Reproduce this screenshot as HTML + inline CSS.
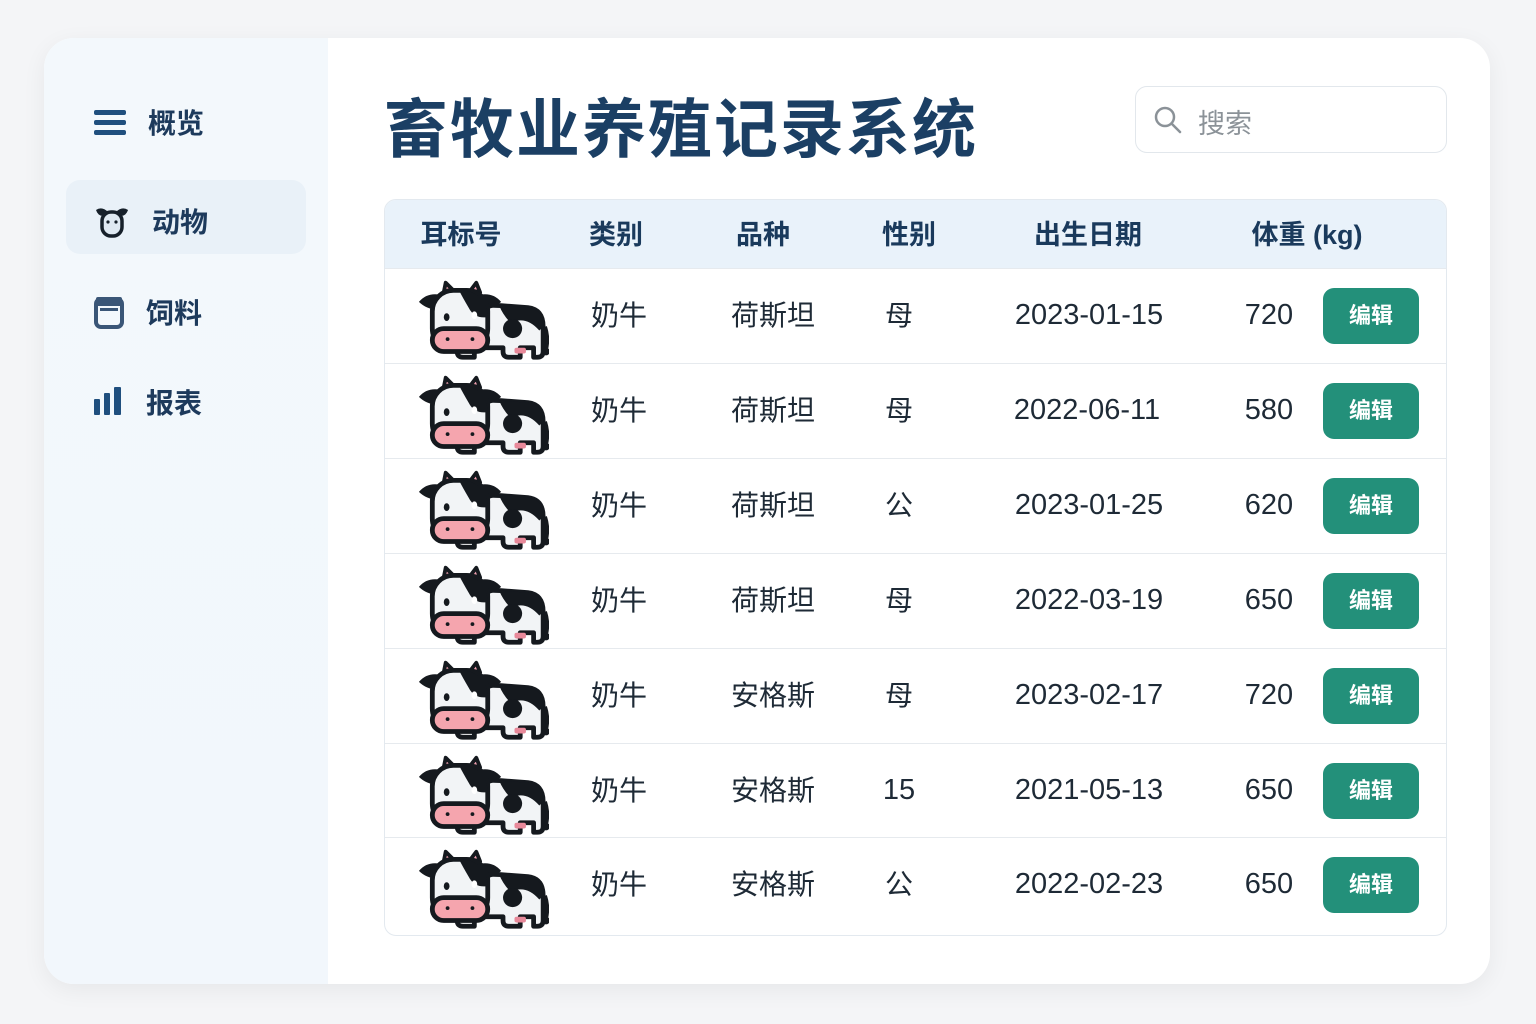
<!DOCTYPE html>
<html><head><meta charset="utf-8"><style>
*{margin:0;padding:0;box-sizing:border-box}
body{width:1536px;height:1024px;background:#f4f5f7;font-family:"Liberation Sans","Noto Sans CJK SC",sans-serif;position:relative;overflow:hidden}
.card{position:absolute;left:44px;top:38px;width:1446px;height:946px;background:#fff;border-radius:30px;box-shadow:0 6px 24px rgba(0,0,0,.06);overflow:hidden}
.side{position:absolute;left:0;top:0;width:284px;height:946px;background:linear-gradient(#f3f8fc,#f2f7fc)}
.nav{position:absolute;left:50px;font-size:28px;font-weight:bold;color:#1d3a5c;display:flex;align-items:center}
.nav svg{margin-right:22px}
.active{position:absolute;left:22px;top:142px;width:240px;height:74px;background:#e9f1f8;border-radius:14px}
.title{position:absolute;left:384px;top:80px;font-size:64px;font-weight:bold;color:#1b3f64;letter-spacing:2px;font-family:"Noto Sans CJK SC",sans-serif;line-height:90px}
.search{position:absolute;left:1135px;top:86px;width:312px;height:67px;border:1.5px solid #e2e7ec;border-radius:12px;background:#fff}
.search span{position:absolute;left:62px;top:15px;font-size:27px;color:#8b9298}
.table{position:absolute;left:384px;top:199px;width:1063px;height:737px;border:1.5px solid #e3e9ef;border-radius:12px;overflow:hidden;background:#fff}
.thead{position:absolute;left:0;top:0;width:100%;height:68px;background:#e9f2fa}
.th{position:absolute;top:13px;font-size:27px;font-weight:bold;color:#1a3a5c;transform:translateX(-50%);white-space:nowrap}
.row{position:absolute;left:0;width:100%;height:95px;border-top:1.5px solid #e6eaee}
.td{position:absolute;top:27px;height:40px;line-height:40px;font-size:28px;color:#1e2a36;transform:translateX(-50%);white-space:nowrap}
.n{font-size:29px;top:26px}
.btn{position:absolute;left:938px;top:19px;width:96px;height:56px;background:#23907a;border-radius:11px;color:#fff;font-size:22px;font-weight:bold;text-align:center;line-height:56px}
.cow{position:absolute;left:30px;top:8px}
</style></head><body>
<svg width="0" height="0" style="position:absolute"><defs>
<symbol id="cow" viewBox="0 0 140 90">
<path d="M52 40 Q60 28 90 30 L118 32 Q134 34 134 52 L134 78 Q134 84 128 84 L124 84 L124 74 L110 74 L110 84 L98 84 Q92 84 92 78 L92 74 L62 74 L62 84 L50 84 Q44 84 44 78 L44 60 Z" fill="#f2f4f6" stroke="#15191e" stroke-width="5" stroke-linejoin="round"/>
<path d="M88 30 L118 32 Q134 34 134 52 L130 56 Q116 40 100 48 Q92 40 88 30Z" fill="#15191e"/>
<circle cx="102" cy="54" r="10" fill="#15191e"/>
<path d="M136 52 Q140 64 137 76" stroke="#15191e" stroke-width="4" fill="none"/>
<circle cx="137" cy="78" r="4" fill="#15191e"/>
<rect x="104" y="74" width="12" height="6" rx="2" fill="#e8899a"/>
<path d="M4 26 Q14 14 32 20 L62 20 Q80 14 90 26 Q82 34 70 34 L24 34 Q12 34 4 26Z" fill="#15191e"/>
<path d="M30 16 L32 6 L40 14 Z M58 14 L64 6 L68 16Z" fill="#f0a0b0" stroke="#15191e" stroke-width="4" stroke-linejoin="round"/>
<rect x="18" y="14" width="58" height="62" rx="22" fill="#f2f4f6" stroke="#15191e" stroke-width="5"/>
<path d="M46 14 Q74 14 76 42 Q62 44 56 32 Q50 22 46 14Z" fill="#15191e"/>
<ellipse cx="33" cy="42" rx="3" ry="4" fill="#15191e"/>
<ellipse cx="62" cy="40" rx="3" ry="4" fill="#fff"/>
<rect x="18" y="54" width="58" height="24" rx="12" fill="#f5a5ae" stroke="#15191e" stroke-width="5"/>
<circle cx="34" cy="65" r="2" fill="#15191e"/><circle cx="60" cy="65" r="2" fill="#15191e"/>
</symbol></defs></svg>
<div class="card">
<div class="side"></div>
<div class="active"></div>
<div class="nav" style="top:64px"><svg width="32" height="28"><rect x="0" y="2" width="32" height="5" rx="2" fill="#1f4f7e"/><rect x="0" y="12" width="32" height="5" rx="2" fill="#1f4f7e"/><rect x="0" y="22" width="32" height="5" rx="2" fill="#1f4f7e"/></svg>概览</div>
<div class="nav" style="top:163px"><svg width="36" height="34" viewBox="0 0 36 34"><path d="M2 6 Q8 2 14 8 L22 8 Q28 2 34 6 Q32 12 27 12 L9 12 Q4 12 2 6Z" fill="#16202a"/><rect x="8" y="8" width="20" height="24" rx="9" fill="#dfe9f2" stroke="#16202a" stroke-width="3.5"/><circle cx="14" cy="18" r="1.6" fill="#16202a"/><circle cx="22" cy="18" r="1.6" fill="#16202a"/></svg>动物</div>
<div class="nav" style="top:254px"><svg width="30" height="34" viewBox="0 0 30 34"><rect x="2" y="4" width="26" height="28" rx="5" fill="none" stroke="#3a5677" stroke-width="4"/><rect x="2" y="2" width="26" height="9" rx="2" fill="#3a5677"/><rect x="6" y="13" width="18" height="3" fill="#3a5677"/></svg>饲料</div>
<div class="nav" style="top:344px"><svg width="30" height="30"><rect x="0" y="12" width="6" height="16" rx="1" fill="#1f4f7e"/><rect x="10" y="6" width="6" height="22" rx="1" fill="#1f4f7e"/><rect x="20" y="0" width="7" height="28" rx="1" fill="#1f4f7e"/></svg>报表</div>
</div>
<div class="title">畜牧业养殖记录系统</div>
<div class="search"><svg width="30" height="30" style="position:absolute;left:17px;top:18px"><circle cx="12" cy="12" r="9" fill="none" stroke="#8b9298" stroke-width="2.5"/><path d="M19 19 L27 27" stroke="#8b9298" stroke-width="2.5" stroke-linecap="round"/></svg><span>搜索</span></div>
<div class="table">
<div class="thead">
<div class="th" style="left:76px">耳标号</div>
<div class="th" style="left:231px">类别</div>
<div class="th" style="left:378px">品种</div>
<div class="th" style="left:524px">性别</div>
<div class="th" style="left:703px">出生日期</div>
<div class="th" style="left:922px">体重 (kg)</div>
</div>
<div class="row" style="top:68px"><svg class="cow" width="134" height="86"><use href="#cow"/></svg><div class="td" style="left:234px">奶牛</div><div class="td" style="left:388px">荷斯坦</div><div class="td" style="left:514px">母</div><div class="td n" style="left:704px">2023-01-15</div><div class="td n" style="left:884px">720</div><div class="btn">编辑</div></div>
<div class="row" style="top:163px"><svg class="cow" width="134" height="86"><use href="#cow"/></svg><div class="td" style="left:234px">奶牛</div><div class="td" style="left:388px">荷斯坦</div><div class="td" style="left:514px">母</div><div class="td n" style="left:702px">2022-06-11</div><div class="td n" style="left:884px">580</div><div class="btn">编辑</div></div>
<div class="row" style="top:258px"><svg class="cow" width="134" height="86"><use href="#cow"/></svg><div class="td" style="left:234px">奶牛</div><div class="td" style="left:388px">荷斯坦</div><div class="td" style="left:514px">公</div><div class="td n" style="left:704px">2023-01-25</div><div class="td n" style="left:884px">620</div><div class="btn">编辑</div></div>
<div class="row" style="top:353px"><svg class="cow" width="134" height="86"><use href="#cow"/></svg><div class="td" style="left:234px">奶牛</div><div class="td" style="left:388px">荷斯坦</div><div class="td" style="left:514px">母</div><div class="td n" style="left:704px">2022-03-19</div><div class="td n" style="left:884px">650</div><div class="btn">编辑</div></div>
<div class="row" style="top:448px"><svg class="cow" width="134" height="86"><use href="#cow"/></svg><div class="td" style="left:234px">奶牛</div><div class="td" style="left:388px">安格斯</div><div class="td" style="left:514px">母</div><div class="td n" style="left:704px">2023-02-17</div><div class="td n" style="left:884px">720</div><div class="btn">编辑</div></div>
<div class="row" style="top:543px"><svg class="cow" width="134" height="86"><use href="#cow"/></svg><div class="td" style="left:234px">奶牛</div><div class="td" style="left:388px">安格斯</div><div class="td n" style="left:514px">15</div><div class="td n" style="left:704px">2021-05-13</div><div class="td n" style="left:884px">650</div><div class="btn">编辑</div></div>
<div class="row" style="top:637px"><svg class="cow" width="134" height="86"><use href="#cow"/></svg><div class="td" style="left:234px">奶牛</div><div class="td" style="left:388px">安格斯</div><div class="td" style="left:514px">公</div><div class="td n" style="left:704px">2022-02-23</div><div class="td n" style="left:884px">650</div><div class="btn">编辑</div></div>
</div>
</body></html>
